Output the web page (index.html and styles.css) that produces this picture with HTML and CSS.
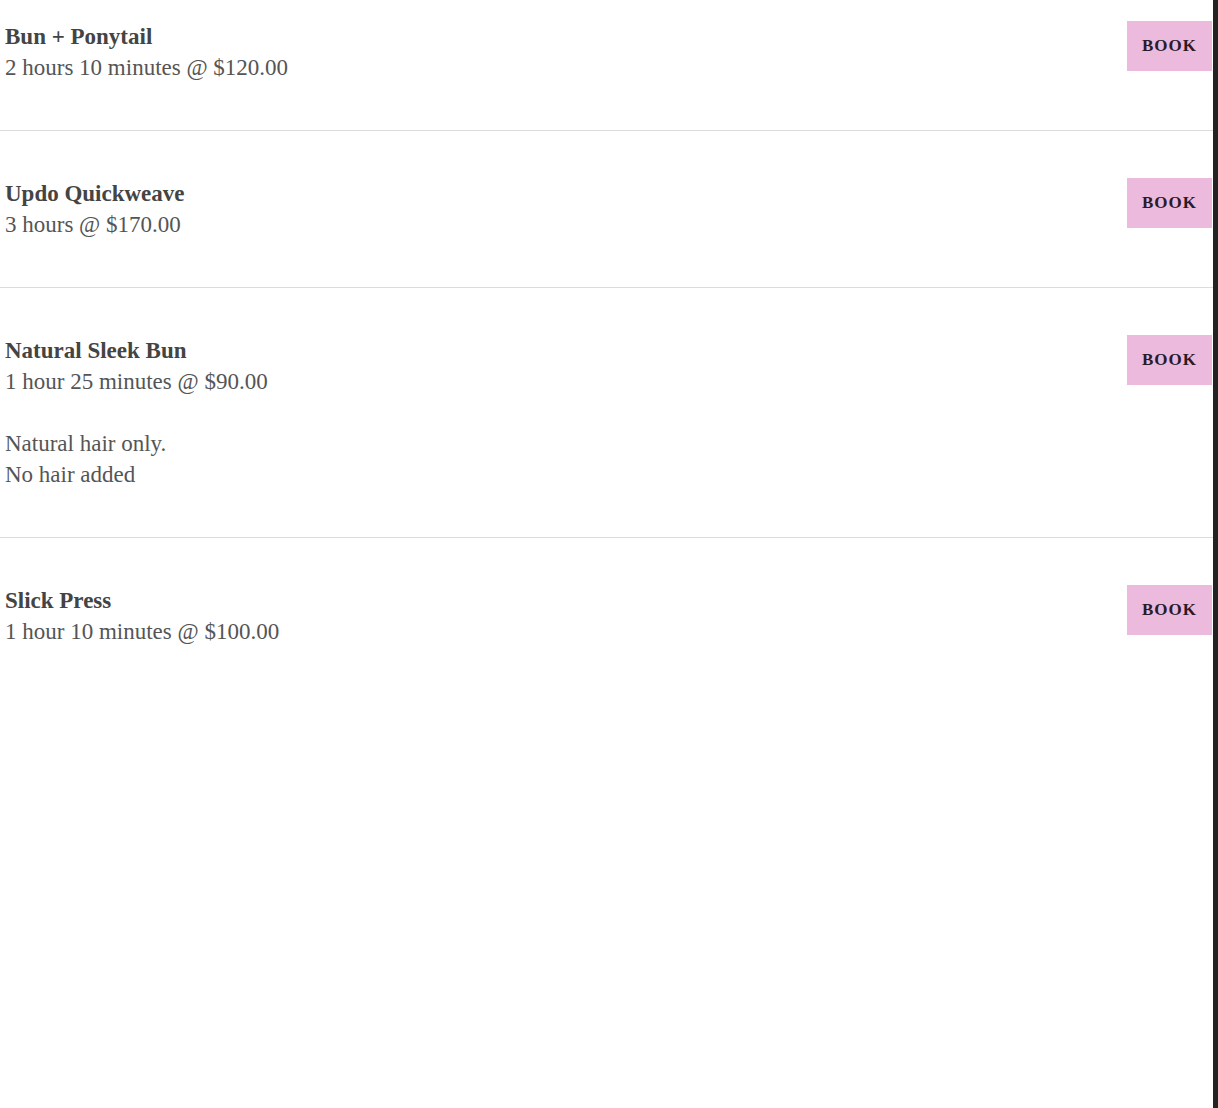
FILE: index.html
```html
<!DOCTYPE html>
<html lang="en">
<head>
<meta charset="utf-8">
<title>Services</title>
<link rel="stylesheet" href="styles.css">
</head>
<body>
<div class="page">
  <main class="list">
    <section class="service first">
      <div class="info">
        <h3 class="name">Bun + Ponytail</h3>
        <p class="meta">2 hours 10 minutes @ $120.00</p>
      </div>
      <button class="book">BOOK</button>
    </section>
    <section class="service">
      <div class="info">
        <h3 class="name">Updo Quickweave</h3>
        <p class="meta">3 hours @ $170.00</p>
      </div>
      <button class="book">BOOK</button>
    </section>
    <section class="service">
      <div class="info">
        <h3 class="name">Natural Sleek Bun</h3>
        <p class="meta">1 hour 25 minutes @ $90.00</p>
        <p class="desc">Natural hair only.<br>No hair added</p>
      </div>
      <button class="book">BOOK</button>
    </section>
    <section class="service last">
      <div class="info">
        <h3 class="name">Slick Press</h3>
        <p class="meta">1 hour 10 minutes @ $100.00</p>
      </div>
      <button class="book">BOOK</button>
    </section>
  </main>
  <div class="scrollbar"></div>
</div>
</body>
</html>
```
FILE: styles.css
```css
html, body {
  margin: 0;
  padding: 0;
  background: #ffffff;
}
.page {
  display: flex;
  height: 100vh;
  overflow: hidden;
}
.list {
  flex: 1;
  display: flex;
  flex-direction: column;
  font-family: "Liberation Serif", "DejaVu Serif", serif;
}
.service {
  display: flex;
  justify-content: space-between;
  align-items: flex-start;
  padding: 47px 1px 47px 5px;
  border-bottom: 1px solid #dcdcdc;
}
.service.first {
  padding-top: 21px;
}
.service.last {
  border-bottom: none;
}
.info {
  display: flex;
  flex-direction: column;
}
.name {
  margin: 0;
  font-size: 23px;
  line-height: 31px;
  font-weight: 700;
  color: #444444;
}
.meta, .desc {
  margin: 0;
  font-size: 23px;
  line-height: 31px;
  color: #555555;
}
.desc {
  margin-top: 31px;
}
.book {
  width: 85px;
  height: 50px;
  border: none;
  background: #ebbadd;
  color: #2b1b29;
  font-family: "Liberation Serif", "DejaVu Serif", serif;
  font-size: 17px;
  font-weight: 700;
  letter-spacing: 1px;
  padding: 0;
  cursor: pointer;
}
.scrollbar {
  width: 5px;
  background: #232323;
}
```
